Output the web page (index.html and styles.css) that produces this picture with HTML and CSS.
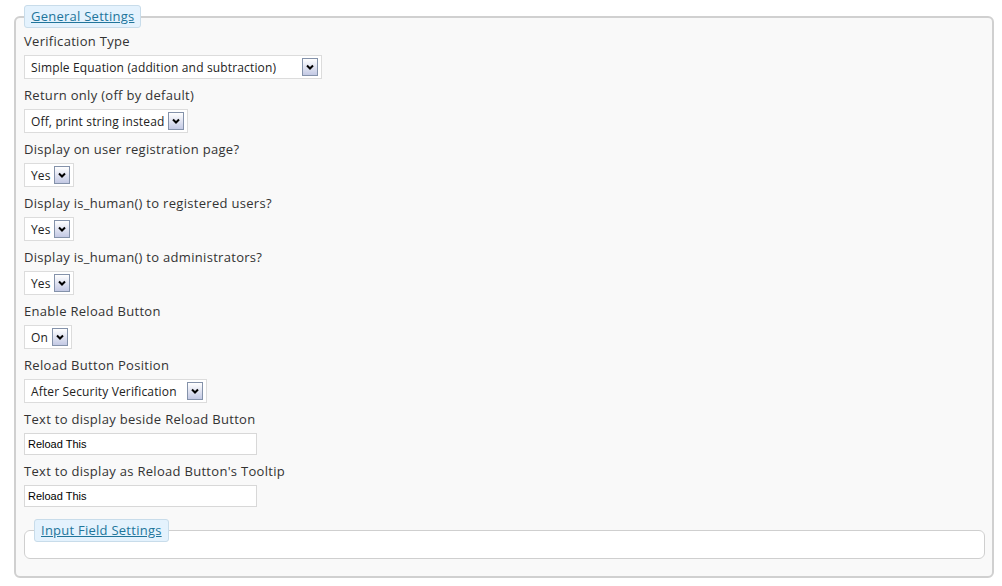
FILE: index.html
```html
<!DOCTYPE html>
<html>
<head>
  <meta charset="UTF-8">
  <title>Captcha Settings</title>
  <link rel="stylesheet" href="styles.css">
</head>
<body>
  <form class="settings">
    <fieldset class="panel">
      <legend class="panel-title"><a href="#">General Settings</a></legend>

      <div class="field">
        <label class="field-label">Verification Type</label>
        <div class="select w-type">
          <span class="select-value">Simple Equation (addition and subtraction)</span>
          <span class="select-arrow"><svg width="16" height="18" viewBox="0 0 16 18"><path d="M5 7.5 L8 10.5 L11 7.5" fill="none" stroke="#000" stroke-width="2"/></svg></span>
        </div>
      </div>

      <div class="field">
        <label class="field-label">Return only (off by default)</label>
        <div class="select w-return">
          <span class="select-value">Off, print string instead</span>
          <span class="select-arrow"><svg width="16" height="18" viewBox="0 0 16 18"><path d="M5 7.5 L8 10.5 L11 7.5" fill="none" stroke="#000" stroke-width="2"/></svg></span>
        </div>
      </div>

      <div class="field">
        <label class="field-label">Display on user registration page?</label>
        <div class="select w-yes">
          <span class="select-value">Yes</span>
          <span class="select-arrow"><svg width="16" height="18" viewBox="0 0 16 18"><path d="M5 7.5 L8 10.5 L11 7.5" fill="none" stroke="#000" stroke-width="2"/></svg></span>
        </div>
      </div>

      <div class="field">
        <label class="field-label">Display is_human() to registered users?</label>
        <div class="select w-yes">
          <span class="select-value">Yes</span>
          <span class="select-arrow"><svg width="16" height="18" viewBox="0 0 16 18"><path d="M5 7.5 L8 10.5 L11 7.5" fill="none" stroke="#000" stroke-width="2"/></svg></span>
        </div>
      </div>

      <div class="field">
        <label class="field-label">Display is_human() to administrators?</label>
        <div class="select w-yes">
          <span class="select-value">Yes</span>
          <span class="select-arrow"><svg width="16" height="18" viewBox="0 0 16 18"><path d="M5 7.5 L8 10.5 L11 7.5" fill="none" stroke="#000" stroke-width="2"/></svg></span>
        </div>
      </div>

      <div class="field">
        <label class="field-label">Enable Reload Button</label>
        <div class="select w-on">
          <span class="select-value">On</span>
          <span class="select-arrow"><svg width="16" height="18" viewBox="0 0 16 18"><path d="M5 7.5 L8 10.5 L11 7.5" fill="none" stroke="#000" stroke-width="2"/></svg></span>
        </div>
      </div>

      <div class="field">
        <label class="field-label">Reload Button Position</label>
        <div class="select w-position">
          <span class="select-value">After Security Verification</span>
          <span class="select-arrow"><svg width="16" height="18" viewBox="0 0 16 18"><path d="M5 7.5 L8 10.5 L11 7.5" fill="none" stroke="#000" stroke-width="2"/></svg></span>
        </div>
      </div>

      <div class="field">
        <label class="field-label" for="reloadText">Text to display beside Reload Button</label>
        <input class="text-input" type="text" id="reloadText" value="Reload This">
      </div>

      <div class="field">
        <label class="field-label" for="reloadTip">Text to display as Reload Button's Tooltip</label>
        <input class="text-input" type="text" id="reloadTip" value="Reload This">
      </div>

      <fieldset class="panel panel-inner">
        <legend class="panel-title"><a href="#">Input Field Settings</a></legend>
      </fieldset>
    </fieldset>
  </form>
</body>
</html>
```

FILE: styles.css
```css
body {
  margin: 0;
  background: #fff;
  font-family: "Open Sans", "DejaVu Sans", sans-serif;
  font-size: 13px;
  color: #333;
}
.settings {
  margin: 0;
  padding: 5px 8px 0 14px;
}
.panel {
  margin: 0;
  padding: 4px 7px 17px 8px;
  background: #f9f9f9;
  border: 2px solid #d0d0d0;
  border-radius: 6px;
  min-width: 0;
}
.panel-title {
  padding: 2px 6px 3px 6px;
  background: #e4f2fd;
  border: 1px solid #c8dcea;
  border-radius: 3px;
  line-height: 16px;
}
.panel-title a {
  color: #21759b;
  text-decoration: underline;
  font-size: 13px;
  letter-spacing: 0.25px;
}
.field {
  margin-bottom: 7px;
}
.field-label {
  display: block;
  line-height: 18px;
  margin-bottom: 5px;
  letter-spacing: 0.3px;
}

/* dropdowns */
.select {
  display: flex;
  align-items: center;
  justify-content: space-between;
  height: 24px;
  box-sizing: border-box;
  padding: 0 3px 0 6px;
  background: #fff;
  border: 1px solid #dcdcdc;
  font-size: 12px;
  letter-spacing: 0.15px;
  color: #222;
}
.select-value {
  white-space: nowrap;
}
.select-arrow {
  display: flex;
  width: 16px;
  height: 18px;
  box-sizing: border-box;
  border: 1px solid #8492aa;
  background: linear-gradient(#ffffff, #c3c9e4);
}
.select-arrow svg {
  margin: -1px;
}
.w-type { width: 298px; }
.w-return { width: 164px; }
.w-yes { width: 50px; }
.w-on { width: 48px; }
.w-position { width: 183px; }

.text-input {
  display: block;
  width: 233px;
  height: 22px;
  box-sizing: border-box;
  margin: 0;
  padding: 0 3px;
  border: 1px solid #d8d8d8;
  background: #fff;
  font-family: "Liberation Sans", Arial, sans-serif;
  font-size: 11px;
  color: #000;
}

/* nested group */
.panel-inner {
  margin-top: 12px;
  padding: 7px 9px 9px 9px;
  background: #fff;
  border: 1px solid #cfcfcf;
  border-radius: 6px;
}
```
